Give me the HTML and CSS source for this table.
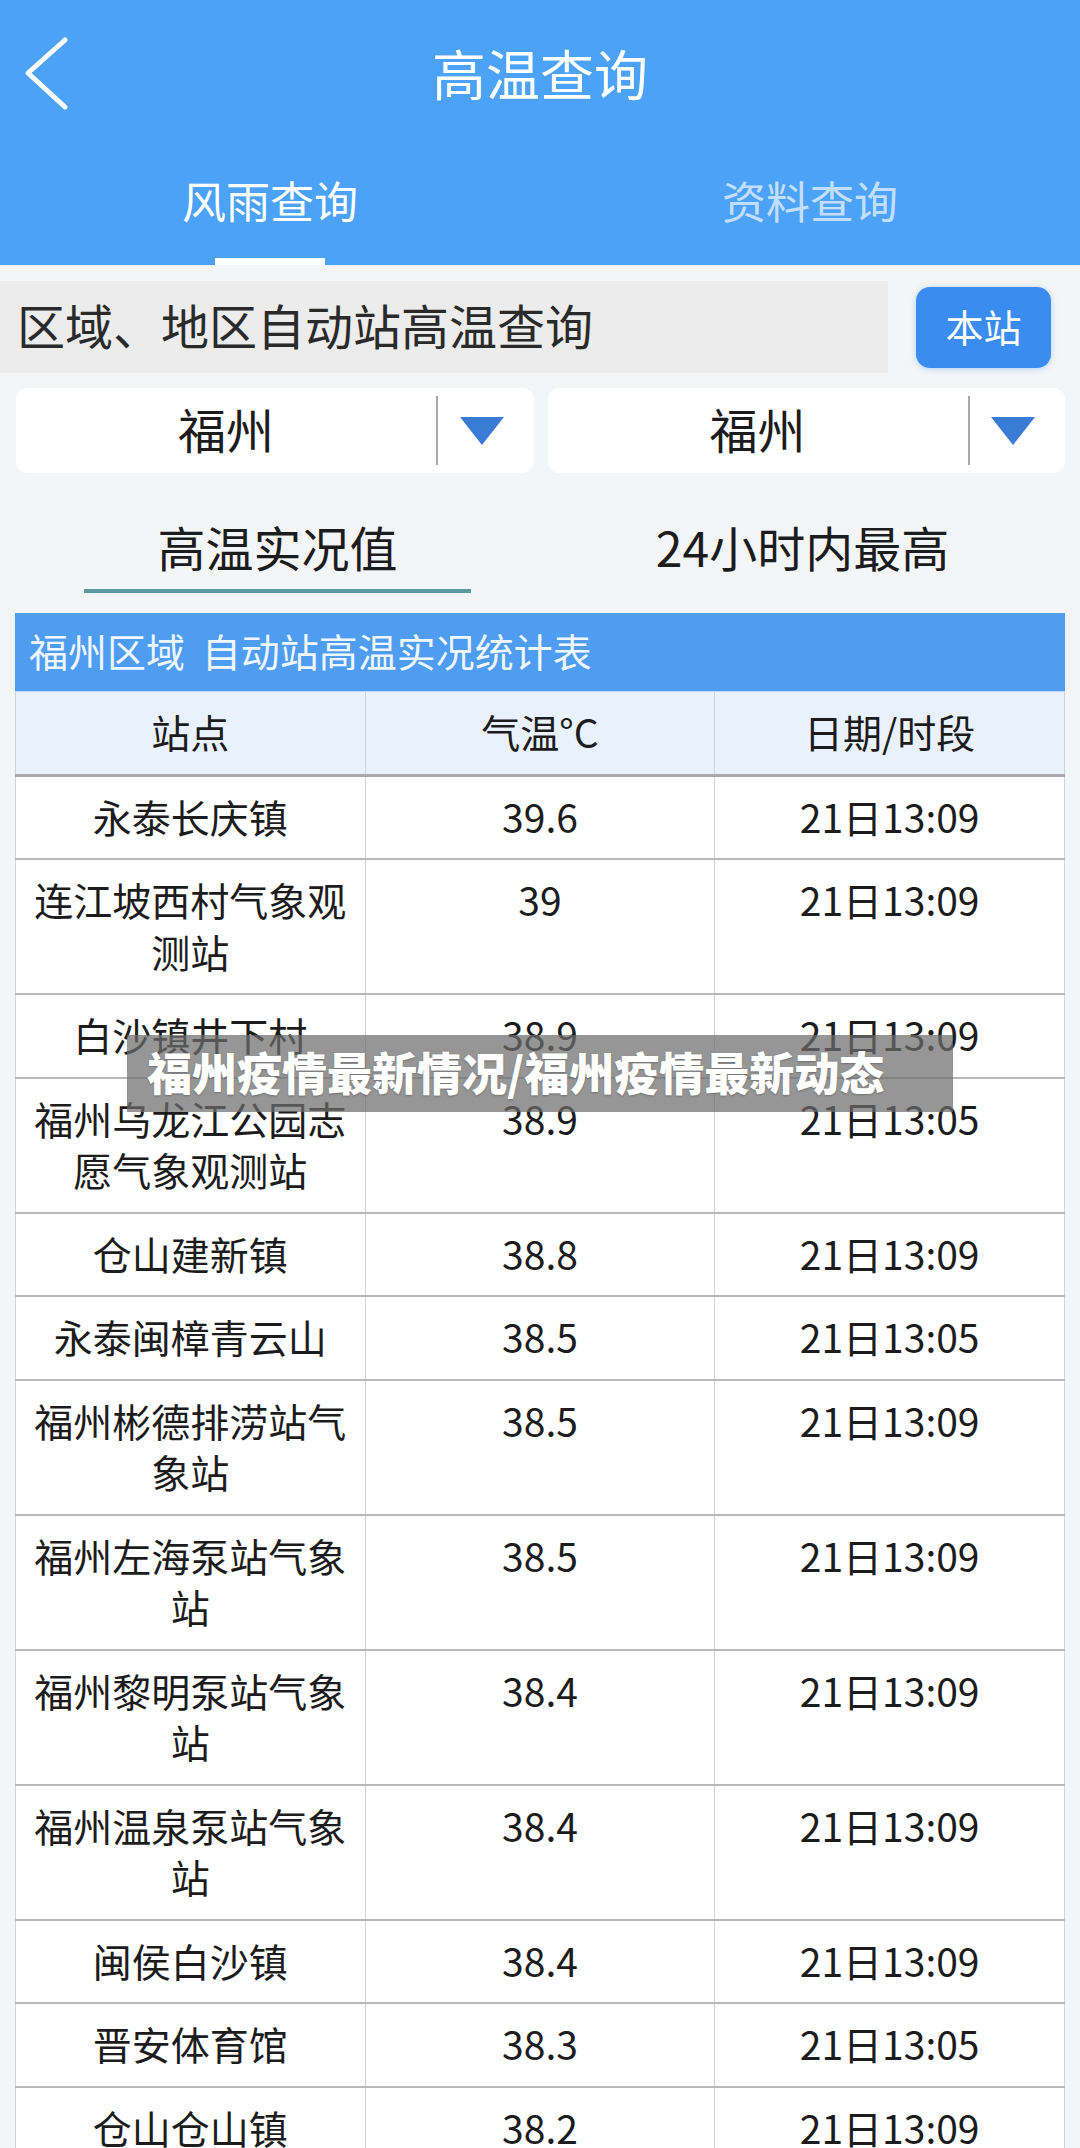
FILE: index.html
```html
<!DOCTYPE html>
<html lang="zh-CN">
<head>
    <meta charset="UTF-8">
    <meta name="viewport" content="width=device-width, initial-scale=1.0">
    <title>高温查询</title>
    <link rel="stylesheet" href="styles.css">
</head>
<body>
    <div class="topbar">
        <div class="titlebar">
            <svg class="back" width="50" height="76" viewBox="0 0 50 76">
                <polyline points="43,4 6,37 43,71" fill="none" stroke="#ffffff" stroke-width="5" stroke-linecap="round" stroke-linejoin="round"/>
            </svg>
            <h1>高温查询</h1>
            <span></span>
        </div>
        <div class="tabs">
            <div class="tab active">风雨查询</div>
            <div class="tab">资料查询</div>
        </div>
    </div>

    <div class="search-row">
        <div class="search-box">区域、地区自动站高温查询</div>
        <button class="station-btn">本站</button>
    </div>

    <div class="selects">
        <div class="select">
            <div class="select-value">福州</div>
            <div class="select-arrow"><span class="triangle"></span></div>
        </div>
        <div class="select">
            <div class="select-value">福州</div>
            <div class="select-arrow"><span class="triangle"></span></div>
        </div>
    </div>

    <div class="subtabs">
        <div class="subtab active"><span>高温实况值</span></div>
        <div class="subtab"><span>24小时内最高</span></div>
    </div>

    <div class="table-wrap">
        <div class="table-title">福州区域 自动站高温实况统计表</div>
        <table class="stats">
            <thead>
                <tr><th>站点</th><th>气温°C</th><th>日期/时段</th></tr>
            </thead>
            <tbody>
                <tr><td>永泰长庆镇</td><td>39.6</td><td>21日13:09</td></tr>
                <tr><td>连江坡西村气象观测站</td><td>39</td><td>21日13:09</td></tr>
                <tr><td>白沙镇井下村</td><td>38.9</td><td>21日13:09</td></tr>
                <tr><td>福州乌龙江公园志愿气象观测站</td><td>38.9</td><td>21日13:05</td></tr>
                <tr><td>仓山建新镇</td><td>38.8</td><td>21日13:09</td></tr>
                <tr><td>永泰闽樟青云山</td><td>38.5</td><td>21日13:05</td></tr>
                <tr><td>福州彬德排涝站气象站</td><td>38.5</td><td>21日13:09</td></tr>
                <tr><td>福州左海泵站气象站</td><td>38.5</td><td>21日13:09</td></tr>
                <tr><td>福州黎明泵站气象站</td><td>38.4</td><td>21日13:09</td></tr>
                <tr><td>福州温泉泵站气象站</td><td>38.4</td><td>21日13:09</td></tr>
                <tr><td>闽侯白沙镇</td><td>38.4</td><td>21日13:09</td></tr>
                <tr><td>晋安体育馆</td><td>38.3</td><td>21日13:05</td></tr>
                <tr><td>仓山仓山镇</td><td>38.2</td><td>21日13:09</td></tr>
            </tbody>
        </table>
    </div>

    <!-- caption strip laid over the table -->
    <div class="banner">福州疫情最新情况/福州疫情最新动态</div>
</body>
</html>
```

FILE: styles.css
```css
body {
    margin: 0;
    background-color: #f4f5f7;
    font-family: "Noto Sans CJK SC", "Noto Sans", sans-serif;
    color: #1c1c1c;
    position: relative;
}
.topbar {
    background-color: #4ba2f7;
    height: 265px;
    display: flex;
    flex-direction: column;
}
.titlebar {
    height: 150px;
    display: grid;
    grid-template-columns: 1fr auto 1fr;
    align-items: center;
}
.back {
    margin-left: 22px;
    margin-top: -2px;
}
.titlebar h1 {
    margin: 0 0 4px;
    color: #ffffff;
    font-size: 54px;
    font-weight: 400;
    line-height: 1;
}
.tabs {
    flex: 1;
    display: flex;
}
.tab {
    flex: 1;
    position: relative;
    display: flex;
    align-items: center;
    justify-content: center;
    padding-bottom: 16px;
    font-size: 44px;
    color: rgba(255, 255, 255, 0.68);
}
.tab.active {
    color: #ffffff;
}
.tab.active::after {
    content: "";
    position: absolute;
    bottom: 0;
    left: 50%;
    width: 110px;
    margin-left: -55px;
    height: 7px;
    background-color: #ffffff;
}
.search-row {
    margin-top: 16px;
    display: flex;
    align-items: center;
    gap: 28px;
    padding-right: 29px;
}
.search-box {
    width: 888px;
    height: 92px;
    box-sizing: border-box;
    background-color: #ececec;
    padding: 0 0 6px 17px;
    display: flex;
    align-items: center;
    font-size: 48px;
    color: #2a2a2a;
}
.station-btn {
    width: 135px;
    height: 81px;
    border: none;
    border-radius: 14px;
    background-color: #3b8cf0;
    box-shadow: 0 1px 6px rgba(59, 140, 240, 0.35);
    color: #ffffff;
    font-family: inherit;
    font-size: 38px;
    padding: 0 0 4px;
}
.selects {
    margin-top: 15px;
    padding: 0 15px 0 16px;
    display: flex;
    gap: 14px;
}
.select {
    flex: 1;
    height: 85px;
    background-color: #ffffff;
    border-radius: 12px;
    display: flex;
    align-items: center;
}
.select-value {
    width: 420px;
    text-align: center;
    font-size: 48px;
    color: #1c1c1c;
    padding-bottom: 5px;
}
.select-arrow {
    flex: 1;
    align-self: stretch;
    margin: 8px 0;
    border-left: 2px solid #a8a8a8;
    display: flex;
    align-items: center;
    justify-content: center;
    padding-right: 8px;
}
.triangle {
    width: 0;
    height: 0;
    border-left: 22px solid transparent;
    border-right: 22px solid transparent;
    border-top: 28px solid #3a7bd6;
}
.subtabs {
    padding: 0 15px;
    display: flex;
}
.subtab {
    flex: 1;
    display: flex;
    flex-direction: column;
    align-items: center;
    padding-top: 46px;
    font-size: 48px;
    line-height: 54px;
    color: #1c1c1c;
}
.subtab::after {
    content: "";
    width: 387px;
    height: 4px;
    margin-top: 16px;
    background-color: transparent;
}
.subtab.active::after {
    background-color: #5d9aa2;
}
.table-wrap {
    margin: 20px 15px 0;
}
.table-title {
    height: 79px;
    box-sizing: border-box;
    background-color: #4e9df1;
    color: #eef6ff;
    font-size: 39px;
    padding: 0 0 5px 14px;
    display: flex;
    align-items: center;
    border-bottom: 1px solid #b8d6f7;
    word-spacing: 8px;
}
.stats {
    width: 100%;
    border-collapse: collapse;
    table-layout: fixed;
    background-color: #ffffff;
}
.stats th,
.stats td {
    padding: 14px 14px 16px;
    font-size: 39px;
    line-height: 51.5px;
    font-weight: 400;
    text-align: center;
    vertical-align: top;
    border-left: 1px solid #d2d2d2;
    border-right: 1px solid #d2d2d2;
    border-top: 2px solid #b9b9b9;
    border-bottom: 2px solid #b9b9b9;
}
.stats thead th {
    background-color: #e9f1fc;
    border-top: none;
    border-bottom: 3px solid #a9a9a9;
}
.banner {
    position: absolute;
    left: 127px;
    top: 1035px;
    width: 826px;
    height: 77px;
    box-sizing: border-box;
    padding: 0 0 4px 20px;
    display: flex;
    align-items: center;
    background-color: rgba(110, 110, 110, 0.72);
    color: #ffffff;
    font-size: 45px;
    font-weight: 900;
    text-shadow: 0 1px 2px rgba(0, 0, 0, 0.25);
}
```
